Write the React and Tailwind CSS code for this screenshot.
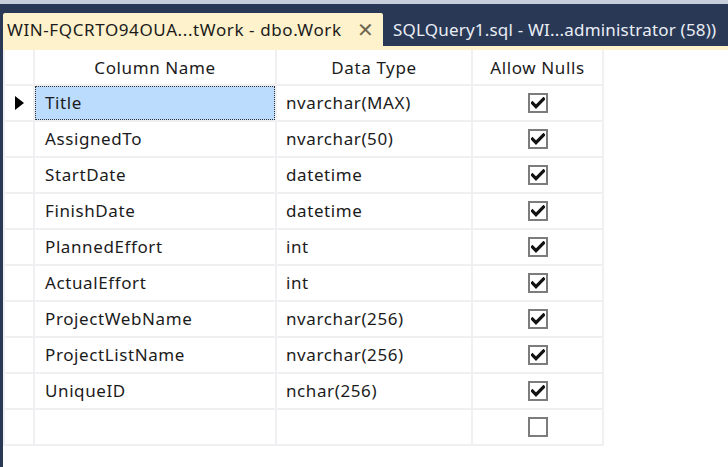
import React from "react";

const rows = [
  ["Title", "nvarchar(MAX)", true],
  ["AssignedTo", "nvarchar(50)", true],
  ["StartDate", "datetime", true],
  ["FinishDate", "datetime", true],
  ["PlannedEffort", "int", true],
  ["ActualEffort", "int", true],
  ["ProjectWebName", "nvarchar(256)", true],
  ["ProjectListName", "nvarchar(256)", true],
  ["UniqueID", "nchar(256)", true],
  ["", "", false],
];

function Check({ on }) {
  return (
    <div className="w-[20px] h-[20px] border-2 border-[#7c7c7c] bg-white flex items-center justify-center">
      {on && (
        <svg width="14" height="12" viewBox="0 0 14 12">
          <path d="M1.5 6 L5 9.6 L12.5 2" fill="none" stroke="#111" strokeWidth="3.2" strokeLinecap="square" />
        </svg>
      )}
    </div>
  );
}

export default function App() {
  const cell = "h-[36px] border-r-2 border-b-2 border-[#f0f0f3] flex items-center";
  return (
    <div
      className="w-[728px] h-[467px] bg-white flex flex-col overflow-hidden text-[17px] tracking-[0.6px] text-[#1b1b1b]"
      style={{ fontFamily: '"Noto Sans", "Open Sans", sans-serif' }}
    >
      <div className="h-[4px] bg-[#c6cedb]" />
      <div className="h-[42px] bg-[#293955] flex items-end pl-[3px]">
        <div className="h-[33px] w-[380px] bg-[#fdf2cc] rounded-t-[2px] flex items-center pl-[4px] pr-[8px]">
          <span className="whitespace-nowrap">WIN-FQCRTO94OUA...tWork - dbo.Work</span>
          <span className="ml-auto text-[#6f6650] text-[20px] leading-none">✕</span>
        </div>
        <div className="h-[33px] flex items-center pl-[10px] text-[#e9edf5] whitespace-nowrap tracking-[0.2px]">
          SQLQuery1.sql - WI...administrator (58))
        </div>
      </div>
      <div className="h-[4px] bg-[#fdf2cc] border-l-[3px] border-[#293955]" />
      <div className="flex-1 flex border-l-[3px] border-[#293955]">
        <div className="grid grid-cols-[32px_242px_196px_131px] content-start">
          <div className={cell + " border-l-2"} />
          <div className={cell + " justify-center pt-[2px]"}>Column Name</div>
          <div className={cell + " justify-center pt-[2px]"}>Data Type</div>
          <div className={cell + " justify-center pt-[2px]"}>Allow Nulls</div>
          {rows.map((r, i) => (
            <React.Fragment key={i}>
              <div className={cell + " border-l-2 bg-white justify-center"}>
                {i === 0 && (
                  <svg width="9" height="14" viewBox="0 0 9 14">
                    <path d="M0 0 L9 7 L0 14 Z" fill="#000" />
                  </svg>
                )}
              </div>
              {i === 0 ? (
                <div className="h-[36px] border-b-2 border-r-2 border-[#f0f0f3] flex">
                  <div className="flex-1 bg-[#bbdcfd] border border-dotted border-[#333] flex items-center pl-[9px]">
                    {r[0]}
                  </div>
                </div>
              ) : (
                <div className={cell + " pl-[10px]"}>{r[0]}</div>
              )}
              <div className={cell + " pl-[9px]"}>{r[1]}</div>
              <div className={cell + " justify-center"}>
                <Check on={r[2]} />
              </div>
            </React.Fragment>
          ))}
        </div>
      </div>
    </div>
  );
}
